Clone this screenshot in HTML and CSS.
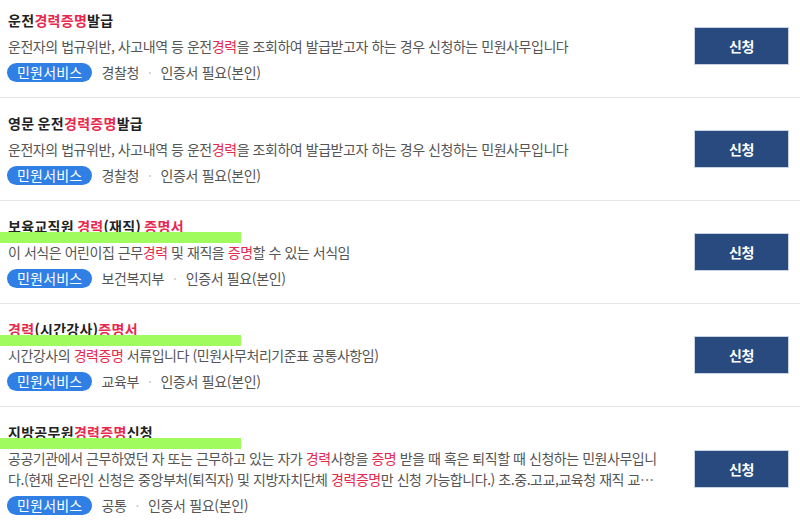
FILE: index.html
```html
<!DOCTYPE html>
<html lang="ko">
<head>
<meta charset="utf-8">
<title>민원서비스 검색결과</title>
<link rel="stylesheet" href="styles.css">
</head>
<body>
<ul class="list">
  <li class="item">
    <div class="info">
      <h3 class="title">운전<em>경력증명</em>발급</h3>
      <p class="desc">운전자의 법규위반, 사고내역 등 운전<em>경력</em>을 조회하여 발급받고자 하는 경우 신청하는 민원사무입니다</p>
      <div class="meta"><span class="tag">민원서비스</span><span class="org">경찰청</span><span class="dot">·</span><span class="req">인증서 필요(본인)</span></div>
    </div>
    <button class="apply" type="button">신청</button>
  </li>
  <li class="item">
    <div class="info">
      <h3 class="title">영문 운전<em>경력증명</em>발급</h3>
      <p class="desc">운전자의 법규위반, 사고내역 등 운전<em>경력</em>을 조회하여 발급받고자 하는 경우 신청하는 민원사무입니다</p>
      <div class="meta"><span class="tag">민원서비스</span><span class="org">경찰청</span><span class="dot">·</span><span class="req">인증서 필요(본인)</span></div>
    </div>
    <button class="apply" type="button">신청</button>
  </li>
  <li class="item">
    <div class="info">
      <h3 class="title">보육교직원 <em>경력</em>(재직) <em>증명서</em><span class="mark"></span></h3>
      <p class="desc">이 서식은 어린이집 근무<em>경력</em> 및 재직을 <em>증명</em>할 수 있는 서식임</p>
      <div class="meta"><span class="tag">민원서비스</span><span class="org">보건복지부</span><span class="dot">·</span><span class="req">인증서 필요(본인)</span></div>
    </div>
    <button class="apply" type="button">신청</button>
  </li>
  <li class="item">
    <div class="info">
      <h3 class="title"><em>경력</em>(시간강사)<em>증명서</em><span class="mark"></span></h3>
      <p class="desc">시간강사의 <em>경력증명</em> 서류입니다 (민원사무처리기준표 공통사항임)</p>
      <div class="meta"><span class="tag">민원서비스</span><span class="org">교육부</span><span class="dot">·</span><span class="req">인증서 필요(본인)</span></div>
    </div>
    <button class="apply" type="button">신청</button>
  </li>
  <li class="item">
    <div class="info">
      <h3 class="title">지방공무원<em>경력증명</em>신청<span class="mark"></span></h3>
      <p class="desc clamp">공공기관에서 근무하였던 자 또는 근무하고 있는 자가 <em>경력</em>사항을 <em>증명</em> 받을 때 혹은 퇴직할 때 신청하는 민원사무입니다.(현재 온라인 신청은 중앙부처(퇴직자) 및 지방자치단체 <em>경력증명</em>만 신청 가능합니다.) 초.중.고교,교육청 재직 교육공무원은 해당 교육청에 신청하시기 바랍니다.</p>
      <div class="meta"><span class="tag">민원서비스</span><span class="org">공통</span><span class="dot">·</span><span class="req">인증서 필요(본인)</span></div>
    </div>
    <button class="apply" type="button">신청</button>
  </li>
</ul>
</body>
</html>
```
FILE: styles.css
```css
* { box-sizing: border-box; }
html, body {
  margin: 0;
  padding: 0;
  background: #fff;
}
body {
  font-family: "Noto Sans CJK KR", "Noto Sans", sans-serif;
  color: #333;
  overflow: hidden;
}
.list {
  list-style: none;
  margin: -5px 0 0;
  padding: 0;
}
.item {
  position: relative;
  display: flex;
  align-items: center;
  padding: 15px 11px 15px 8px;
  border-bottom: 1px solid #e6e6e6;
}
.info {
  width: 658px;
  flex: none;
}
.title {
  margin: 0;
  font-size: 14px;
  font-weight: 700;
  line-height: 20px;
  letter-spacing: 0.3px;
  word-spacing: -1px;
  color: #222;
}
em {
  font-style: normal;
  color: #e8284d;
}
.mark {
  position: absolute;
  left: 0;
  top: 31px;
  width: 241px;
  height: 11px;
  background: #a0fb5e;
}
.desc {
  margin: 6px 0 0;
  font-size: 14px;
  line-height: 21px;
  letter-spacing: -0.45px;
  color: #555;
  word-break: break-all;
}
.clamp {
  display: -webkit-box;
  -webkit-box-orient: vertical;
  -webkit-line-clamp: 2;
  overflow: hidden;
}
.meta {
  display: flex;
  align-items: center;
  margin-top: 6px;
  font-size: 14px;
  letter-spacing: -0.35px;
  color: #555;
  line-height: 19px;
}
.tag {
  height: 19px;
  padding: 0 10px;
  margin-left: -1px;
  border-radius: 10px;
  background: #2f7fe4;
  color: #fff;
  letter-spacing: 0.2px;
}
.org {
  margin-left: 9px;
}
.dot {
  margin: 0 9px;
  color: #ccc;
}
.apply {
  margin-left: auto;
  width: 95px;
  height: 38px;
  border: 1px solid #c9d2e0;
  background: #284a7e;
  color: #fff;
  font-family: inherit;
  font-size: 14px;
  font-weight: 700;
  letter-spacing: -0.3px;
  cursor: pointer;
}
```
